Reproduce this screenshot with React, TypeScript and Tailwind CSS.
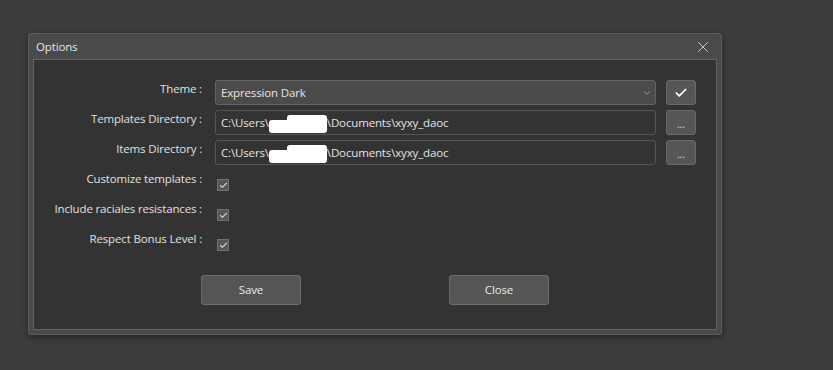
import { Check, ChevronDown, X } from "lucide-react";

const font = { fontFamily: '"Open Sans", "Noto Sans", sans-serif' };

function Redacted() {
  return (
    <span className="relative inline-block h-[16px] w-[58px] align-middle">
      <span className="absolute left-0 top-[5px] h-[13px] w-[58px] rounded-[3px] bg-white" />
      <span className="absolute left-[18px] top-[0px] h-[12px] w-[40px] rounded-[3px] bg-white" />
    </span>
  );
}

function PathBox() {
  return (
    <div className="flex h-[25px] w-[441px] items-center rounded-[3px] border border-[#565656] bg-[#333333] pl-[5px] text-[#e4e4e4]">
      <span>C:\Users\</span>
      <Redacted />
      <span>\Documents\xyxy_daoc</span>
    </div>
  );
}

function SideButton({ children }: { children: React.ReactNode }) {
  return (
    <button className="ml-[10px] flex h-[25px] w-[30px] items-center justify-center rounded-[3px] border border-[#6a6a6a] bg-[#565656] text-[#d0d0d0]">
      {children}
    </button>
  );
}

function CheckRow({ label }: { label: string }) {
  return (
    <div className="flex h-[30px] items-start">
      <div className="w-[168px] text-right leading-[17px] text-[#e0e0e0]">{label}</div>
      <div className="ml-[15px] mt-[9px] flex h-[12px] w-[12px] items-center justify-center border border-[#727272] bg-[#575757]">
        <Check size={9} strokeWidth={3} className="text-[#cfcfcf]" />
      </div>
    </div>
  );
}

export default function App() {
  return (
    <div
      className="h-[370px] w-[833px] bg-[#3d3d3d] pl-[28px] pt-[33px] text-[11.5px] tracking-[-0.15px]"
      style={font}
    >
      <div className="flex h-[302px] w-[694px] flex-col rounded-[3px] border border-[#5c5c5c] bg-[#4a4a4b] shadow-[0_2px_6px_rgba(0,0,0,0.45)]">
        <div className="flex h-[25px] items-center justify-between pl-[7px] pr-[9px]">
          <span className="text-[#e6e6e6]">Options</span>
          <X size={18} strokeWidth={1.3} className="text-[#cacaca]" />
        </div>
        <div className="mx-[4px] mb-[4px] flex flex-1 flex-col border border-[#636363] bg-[#333333] pt-[20px]">
          <div className="flex h-[25px] items-start">
            <div className="w-[168px] text-right leading-[17px] text-[#e0e0e0]">Theme :</div>
            <div className="ml-[13px] flex h-[25px] w-[441px] items-center justify-between rounded-[3px] border border-[#646464] bg-[#4b4b4b] pl-[5px] pr-[3px] text-[#e6e6e6]">
              <span>Expression Dark</span>
              <ChevronDown size={10} strokeWidth={2} className="text-[#a8a8a8]" />
            </div>
            <SideButton>
              <Check size={14} strokeWidth={3} className="text-white" />
            </SideButton>
          </div>
          <div className="mt-[5px] flex h-[25px] items-start">
            <div className="w-[168px] text-right leading-[17px] text-[#e0e0e0]">Templates Directory :</div>
            <div className="ml-[13px]">
              <PathBox />
            </div>
            <SideButton>
              <span className="pt-[3px] text-[11px]">...</span>
            </SideButton>
          </div>
          <div className="mt-[5px] flex h-[25px] items-start">
            <div className="w-[168px] text-right leading-[17px] text-[#e0e0e0]">Items Directory :</div>
            <div className="ml-[13px]">
              <PathBox />
            </div>
            <SideButton>
              <span className="pt-[3px] text-[11px]">...</span>
            </SideButton>
          </div>
          <div className="mt-[5px] flex flex-col">
            <CheckRow label="Customize templates :" />
            <CheckRow label="Include raciales resistances :" />
            <CheckRow label="Respect Bonus Level :" />
          </div>
          <div className="mt-[15px] flex">
            <button className="ml-[167px] h-[30px] w-[100px] rounded-[3px] border border-[#6e6e6e] bg-[#555555] text-[#eaeaea]">
              Save
            </button>
            <button className="ml-[148px] h-[30px] w-[100px] rounded-[3px] border border-[#6e6e6e] bg-[#555555] text-[#eaeaea]">
              Close
            </button>
          </div>
        </div>
      </div>
    </div>
  );
}
